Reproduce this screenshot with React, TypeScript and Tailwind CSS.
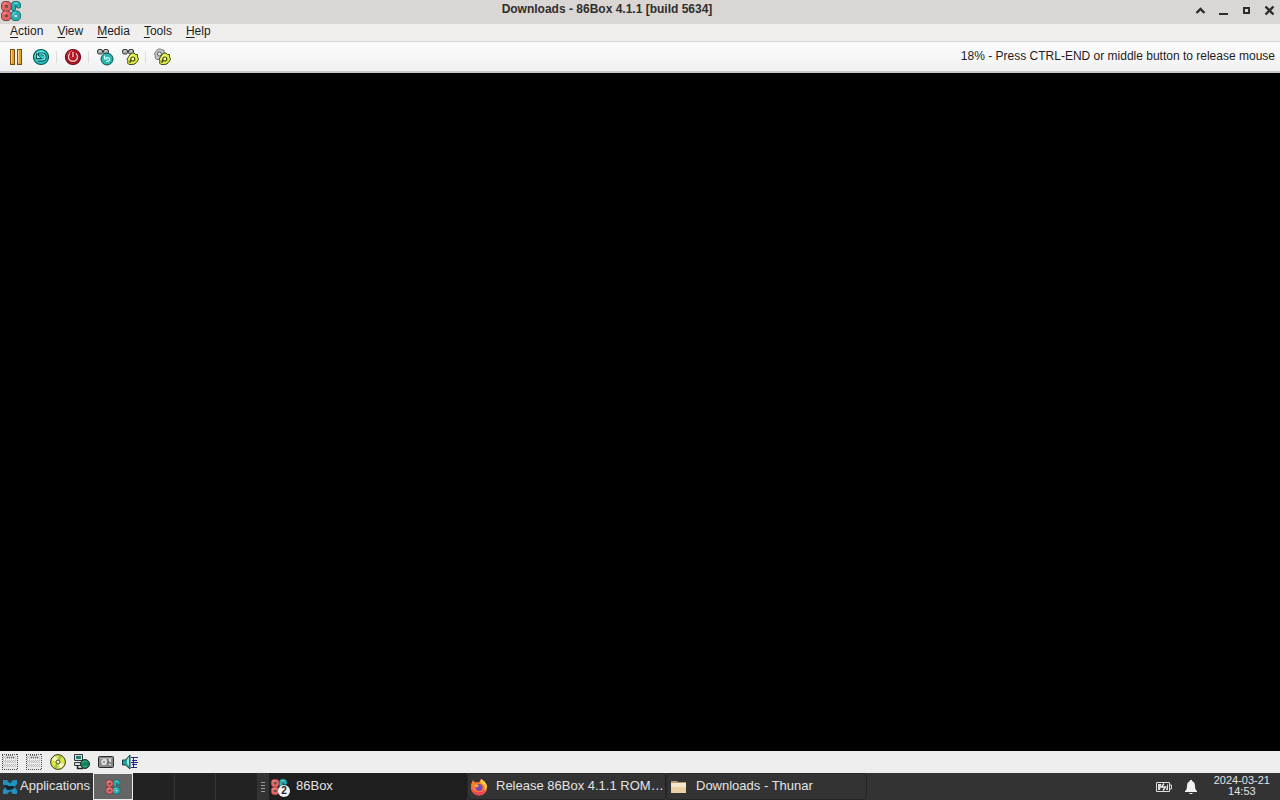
import type { ReactNode } from "react";

const menus = ["Action", "View", "Media", "Tools", "Help"];

function BoxLogo({ className }: { className: string }) {
  return (
    <svg viewBox="0 0 22 22" className={className} aria-hidden="true">
      <g fill="none" strokeLinecap="round" strokeLinejoin="round">
        <g stroke="#6a3034" strokeWidth="5">
          <rect x="3.500" y="3.500" width="5.500" height="5.500" rx="2" />
          <rect x="3.500" y="13" width="5.500" height="5.500" rx="2" />
        </g>
        <g stroke="#0f6065" strokeWidth="5">
          <path d="M18.500 6V5.500q0-2-2-2H15q-1.500 0-1.500 2v3" />
          <rect x="13" y="13" width="5.500" height="5.500" rx="2" />
        </g>
        <g stroke="#e06468" strokeWidth="3.600">
          <rect x="3.500" y="3.500" width="5.500" height="5.500" rx="2" />
          <rect x="3.500" y="13" width="5.500" height="5.500" rx="2" />
        </g>
        <g stroke="#26aeb0" strokeWidth="3.600">
          <path d="M18.500 6V5.500q0-2-2-2H15q-1.500 0-1.500 2v3" />
          <rect x="13" y="13" width="5.500" height="5.500" rx="2" />
        </g>
        <path d="M3 4.500q.5-1.500 3-1.500M3 14q.5-1.500 3-1.500" stroke="#f7a3a3" />
        <path d="M14.500 3h3M12.600 15q0-2.500 3-2.500" stroke="#83e5df" />
      </g>
      <path d="M5 5.500h3v2H5zM5 15h3v2H5z" fill="#4f5a3f" />
      <path d="M14.500 15h2.500v2h-2.500z" fill="#c8efe9" />
    </svg>
  );
}

function Pause() {
  return (
    <svg viewBox="0 0 18 18" className="size-[18px]" aria-hidden="true">
      <path d="M3 1h5v16H3zM10 1h5v16h-5z" fill="#7a4d08" />
      <path d="M4 2h3v14H4zM11 2h3v14h-3z" fill="#e3a02a" />
      <path d="M4 2h1v13H4zM11 2h1v13h-1z" fill="#ffd67a" />
    </svg>
  );
}

function Reset() {
  return (
    <svg viewBox="0 0 18 18" className="size-[18px]" aria-hidden="true">
      <circle cx="9" cy="9" r="7.500" fill="#1fcac4" stroke="#075255" strokeWidth="1.200" />
      <path d="M3 9a6 6 0 0 1 9-5" fill="none" stroke="#74efe6" />
      <path d="M6 6h4q3.500 0 3.500 3T10 12.500H6" fill="none" stroke="#075155" strokeWidth="2.400" />
      <path d="M4 5v6h6L7.500 8z" fill="#075155" />
      <path d="M7 6h3q3 0 3 3t-3 3H6" fill="none" stroke="#9df3ea" strokeWidth="1.200" />
      <path d="M5 6.500V10h3.500z" fill="#9df3ea" />
    </svg>
  );
}

function Power() {
  return (
    <svg viewBox="0 0 18 18" className="size-[18px]" aria-hidden="true">
      <circle cx="9" cy="9" r="7.500" fill="#cb1b2a" stroke="#650811" strokeWidth="1.200" />
      <path d="M3 8a6 6 0 0 1 5-5" fill="none" stroke="#ef6872" />
      <path d="M6 5.500a4.500 4.500 0 1 0 6 0M9 4v5" fill="none" stroke="#7d0914" strokeWidth="3" />
      <path d="M6 5.500a4.500 4.500 0 1 0 6 0M9 4v5" fill="none" stroke="#f5c0c0" strokeWidth="1.500" />
    </svg>
  );
}

function Keys() {
  return (
    <g stroke="#383c3e">
      <rect x="1.500" y="1.500" width="5" height="4.500" rx="1.500" fill="#a3a8ab" />
      <rect x="7.500" y="1.500" width="5" height="4.500" rx="1.500" fill="#a3a8ab" />
      <path d="M3 3h2M9 3h2" stroke="#e2e5e6" />
    </g>
  );
}

function Gear() {
  return (
    <g>
      <path d="M9 6.500l2-1.500h2l1.500 1.500h2V9l1 2-1 2-2.500 3-3 .500H8L6.500 15l.5-2-1-2 1.500-2z" fill="#e2ec45" stroke="#464c10" />
      <path d="M8.500 10q.5-2.500 3-2.500" fill="none" stroke="#fbffb0" />
      <circle cx="11.800" cy="11" r="2" fill="#fbffd0" stroke="#4a5010" strokeWidth="1.200" />
      <path d="M9 15q-.5-1.500 1-3" fill="none" stroke="#34390a" strokeWidth="1.200" />
    </g>
  );
}

function CtrlAltDel() {
  return (
    <svg viewBox="0 0 18 18" className="size-[18px]" aria-hidden="true">
      <Keys />
      <circle cx="11" cy="11" r="6" fill="#27b7ad" stroke="#0a5254" />
      <path d="M8.500 7.500v3.500h3.500M9.500 10.500q2.500-2.500 4 0 .500 3-3.500 3" fill="none" stroke="#cff8f2" strokeWidth="1.200" />
    </svg>
  );
}

function CtrlAltEsc() {
  return (
    <svg viewBox="0 0 18 18" className="size-[18px]" aria-hidden="true">
      <Keys />
      <Gear />
    </svg>
  );
}

function Settings() {
  return (
    <svg viewBox="0 0 18 18" className="size-[18px]" aria-hidden="true">
      <path d="M4 2l1.500-1h2L9 2h2v2l1 2-1 2-2 3-3 .500H3.500L2 10l.5-2-1-2 1-2z" fill="#c0c3c4" stroke="#7c8082" />
      <circle cx="6.500" cy="6" r="2" fill="#e9e9e9" stroke="#5c6062" />
      <Gear />
    </svg>
  );
}

function Floppy() {
  return (
    <svg viewBox="0 0 16 16" className="size-4" aria-hidden="true">
      <path d="M0 0h16v16H0z" fill="#e9e9e9" />
      <g fill="none" strokeDasharray="1 1">
        <path d="M0 .500h16M0 15.500h16M.500 1v15M15.500 0v16" stroke="#4a4a4a" />
        <path d="M1 2.500h14M1 4.500h14M1 6.500h14M1 8.500h14M1 10.500h14M1 12.500h14M2 3.500h12M2 7.500h12M2 11.500h12" stroke="#bcbcbc" />
        <path d="M4 1.500h8M5 3.500h7" stroke="#666" />
      </g>
    </svg>
  );
}

function Disc() {
  return (
    <svg viewBox="0 0 16 16" className="size-4" aria-hidden="true">
      <circle cx="8" cy="8" r="7.400" fill="#dce545" stroke="#343a1c" />
      <path d="M8 8L2 6q1-3 4-4zM8 8l6 2q-1 3-4 4z" fill="#f7faca" />
      <path d="M8 8l1-6.500 3 1.500zM8 8l-1 6.500L4 13z" fill="#8cc057" />
      <circle cx="8" cy="8" r="2" fill="#eee" stroke="#4c5215" />
    </svg>
  );
}

function Network() {
  return (
    <svg viewBox="0 0 16 16" className="size-4" aria-hidden="true">
      <path d="M.500 .500h8v6h-8zM.500 8.500h7v3h-7z" fill="#d7dcda" stroke="#303634" />
      <path d="M2 2h5v3H2z" fill="#168473" />
      <path d="M3.500 11v3.500H9" fill="none" stroke="#222" strokeWidth="1.500" />
      <circle cx="11" cy="10" r="4.500" fill="#14805f" stroke="#11352f" />
      <path d="M8 9q2-3 5-1M9 12q2 1.500 4 0" fill="none" stroke="#4fab80" />
    </svg>
  );
}

function Disk() {
  return (
    <svg viewBox="0 0 16 16" className="size-4" aria-hidden="true">
      <rect x=".500" y="2.500" width="15" height="11" rx="1" fill="#8a8a8a" stroke="#2c2c2c" />
      <path d="M2 4.500h12" stroke="#b5b5b5" />
      <path d="M3 7l2-2h3l1 2v3l-2 1H4zM11 5h2v3h-2zM11 10h2v1h-2z" fill="#dedede" />
      <path d="M5 8h2M9 10l2-3" stroke="#555" />
    </svg>
  );
}

function Sound() {
  return (
    <svg viewBox="0 0 16 16" className="size-4" aria-hidden="true">
      <path d="M.500 6h3L8 1v14l-4.500-4h-3z" fill="#27a3a0" stroke="#143e43" />
      <path d="M5 5.500L7 3v9L5 10z" fill="#9be6da" />
      <path d="M9 3.500h7M10 6.500h5M9 8.500h7M10 10.500h5M9 13.500h6M11.500 3v10" fill="none" stroke="#24248c" />
    </svg>
  );
}

function Xfce() {
  return (
    <svg viewBox="0 0 16 16" className="size-4" aria-hidden="true">
      <path d="M1 1h4l3 3.500L11 1h4v4l-2.500 3L15 11v4h-4l-3-3-3 3H1v-4l2.500-3L1 5z" fill="#2191bf" />
      <path d="M3 6h2l1 1h5l2 1-2 2-3 1H5l-1-2-2-2z" fill="#16242c" />
    </svg>
  );
}

function Firefox() {
  return (
    <svg viewBox="0 0 18 18" className="size-[18px]" aria-hidden="true">
      <path d="M3 2l2 2.500 2-.5 2 .500L11 1q6 3.500 6 9a8 7.500 0 0 1-16 0q0-5 2-8z" fill="#ff7a30" />
      <path d="M1.500 8q1 6 7 6.500 5 0 7-5 0 7.500-6.500 8Q2 17 1.500 8z" fill="#f0405c" />
      <path d="M11 1q6 3.500 6 8l-2.500 4Q16 7 10.500 5z" fill="#ffcf3e" />
      <circle cx="9" cy="9.500" r="3.500" fill="#7a45b8" />
      <path d="M4 7q3-1 5 .500L7 9.500q-2 0-3-2.500z" fill="#ffad35" />
    </svg>
  );
}

function Folder() {
  return (
    <svg viewBox="0 0 16 16" className="size-4" aria-hidden="true">
      <path d="M0 3V2h6l1 1h8v11H0z" fill="#b59a75" />
      <path d="M0 4h15v10H0z" fill="#ecd0a5" />
      <path d="M0 4h15v4H0z" fill="#f6e6cb" />
    </svg>
  );
}

function ToolButton({ label, children }: { label: string; children: ReactNode }) {
  return (
    <button type="button" aria-label={label} className="flex h-6 w-[25px] items-center justify-center">
      {children}
    </button>
  );
}

function Divider() {
  return <span className="mx-[3px] h-3 w-px bg-[#deddde]" />;
}

function WindowButton({ label, path, width = 2 }: { label: string; path: string; width?: number }) {
  return (
    <button type="button" aria-label={label} className="flex h-5 w-[23px] items-center justify-end pr-[5px]">
      <svg viewBox="0 0 11 11" className="size-[11px]" aria-hidden="true">
        <path d={path} fill="none" stroke="#302d2b" strokeWidth={width} />
      </svg>
    </button>
  );
}

export default function App() {
  return (
    <div className="flex min-h-screen flex-col bg-black font-['Liberation_Sans',sans-serif] text-[12px] text-[#1d1d1d]">
      <header className="flex h-6 items-start bg-[#d9d6d3]">
        <BoxLogo className="size-[22px]" />
        <h1 className="flex-1 pl-1 text-center text-[12px] leading-[18px] font-bold text-[#302e2d]">
          Downloads - 86Box 4.1.1 [build 5634]
        </h1>
        <div className="flex">
          <WindowButton label="Roll up" path="M1.500 8L5.500 4l4 4" width={2.4} />
          <WindowButton label="Minimize" path="M1 9h9" />
          <WindowButton label="Maximize" path="M3 3h5v5H3z" />
          <WindowButton label="Close" path="M1.500 1.500l8 8M9.500 1.500l-8 8" width={2.4} />
        </div>
      </header>

      <nav className="flex h-[18px] items-start border-b border-[#d5d4d4] bg-[#f0efee] px-[3px]">
        {menus.map((menu) => (
          <button key={menu} type="button" className="px-[7px] text-[12px] leading-[14px]">
            <span className="underline underline-offset-2">{menu[0]}</span>
            {menu.slice(1)}
          </button>
        ))}
      </nav>

      <div className="flex h-[31px] items-center border-b-2 border-[#c9c9c9] bg-linear-to-b from-[#fcfcfc] to-[#f1f1f1] px-[3px]">
        <ToolButton label="Pause"><Pause /></ToolButton>
        <ToolButton label="Hard reset"><Reset /></ToolButton>
        <Divider />
        <ToolButton label="Power off"><Power /></ToolButton>
        <Divider />
        <ToolButton label="Send Ctrl+Alt+Del"><CtrlAltDel /></ToolButton>
        <ToolButton label="Send Ctrl+Alt+Esc"><CtrlAltEsc /></ToolButton>
        <Divider />
        <ToolButton label="Settings"><Settings /></ToolButton>
        <p className="ml-auto pr-[2px] pb-[2px] leading-4">18% - Press CTRL-END or middle button to release mouse</p>
      </div>

      <main className="flex-1 bg-black" />

      <div className="flex h-[22px] items-center gap-2 bg-[#efeeee] px-[2px]">
        <Floppy />
        <Floppy />
        <Disc />
        <Network />
        <Disk />
        <Sound />
      </div>

      <footer className="flex h-[27px] items-stretch bg-[#333333] text-[13px] text-[#e4e4e4]">
        <button type="button" className="flex w-[93px] items-center gap-[2px] pl-[2px]">
          <Xfce />
          <span className="pb-[2px]">Applications</span>
        </button>
        <button type="button" aria-label="Workspace 1" className="flex w-10 items-center justify-center border border-[#eeeeee] bg-[#656565]">
          <BoxLogo className="size-4" />
        </button>
        <button type="button" aria-label="Workspace 2" className="w-[42px] border-r border-[#343434] bg-[#222222]" />
        <button type="button" aria-label="Workspace 3" className="w-[41px] border-r border-[#343434] bg-[#222222]" />
        <button type="button" aria-label="Workspace 4" className="w-[41px] bg-[#222222]" />
        <span className="flex w-3 items-center justify-center">
          <svg viewBox="0 0 4 10" className="h-[10px] w-1" aria-hidden="true">
            <path d="M0 .5h4M0 3.500h4M0 6.500h4M0 9.500h4" stroke="#999" />
          </svg>
        </span>
        <button type="button" className="flex w-[198px] items-center gap-2 bg-[#1e1e1e] pl-px text-left">
          <span className="relative">
            <BoxLogo className="size-[18px]" />
            <span className="absolute top-[7px] left-2 size-3 rounded-full bg-[#f2f2f2] text-center text-[10px] leading-3 font-bold text-[#222222]">2</span>
          </span>
          <span className="pb-[2px]">86Box</span>
        </button>
        <button type="button" className="flex w-[199px] items-center gap-2 rounded-sm border border-[#252525] pl-[2px] text-left">
          <Firefox />
          <span className="pb-[2px] whitespace-nowrap">Release 86Box 4.1.1 ROM…</span>
        </button>
        <button type="button" className="flex w-[201px] items-center gap-2 rounded-sm border border-[#252525] pl-1 text-left">
          <Folder />
          <span className="pb-[2px] pl-px">Downloads - Thunar</span>
        </button>
        <div className="ml-auto flex items-center pr-[10px]">
          <svg viewBox="0 0 16 12" className="mr-3 h-3 w-4" role="img" aria-label="Battery charging">
            <path d="M.500 1.500h13v9H.500zM13.500 4h2v4h-2" fill="none" stroke="#dedede" />
            <path d="M2 3h3.500L4 9H2zM10 9l1.500-6h.5v6z" fill="#dedede" />
            <path d="M8 2.500L5.500 6h4L7 9.500" fill="none" stroke="#eee" strokeWidth="1.300" />
          </svg>
          <svg viewBox="0 0 14 16" className="mr-4 h-4 w-[14px]" role="img" aria-label="Notifications">
            <path d="M6 2V1h2v1q3 1 3 5 0 4 2 5v1H1v-1q2-1 2-5 0-4 3-5zM5 14h4l-1 1H6z" fill="#f1f1f1" />
          </svg>
          <time dateTime="2024-03-21T14:53" className="pb-[2px] text-center text-[11px] leading-[11px]">
            2024-03-21<br />14:53
          </time>
        </div>
      </footer>
    </div>
  );
}
